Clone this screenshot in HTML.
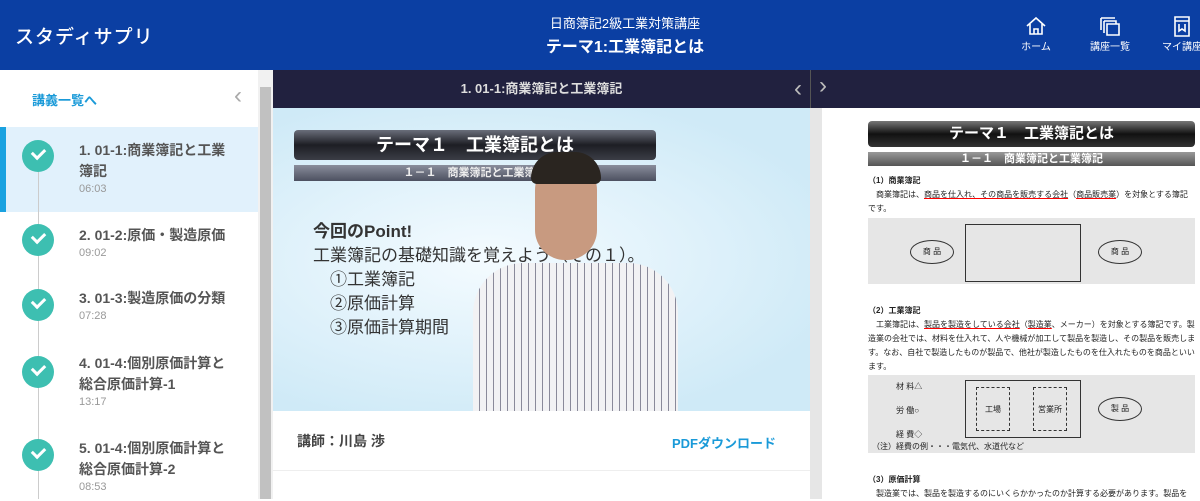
<!DOCTYPE html>
<html><head><meta charset="utf-8"><style>
*{margin:0;padding:0;box-sizing:border-box}
body{width:1200px;height:499px;overflow:hidden;font-family:"Liberation Sans","Noto Sans CJK JP",sans-serif;background:#fff;position:relative}
.hd{position:absolute;left:0;top:0;width:1200px;height:70px;background:#0b3fa3;color:#fff}
.logo{position:absolute;left:15px;top:22px;font-size:19px;letter-spacing:1px;font-weight:500}
.t1{position:absolute;left:0;width:1250px;top:13px;text-align:center;font-size:13px}
.t2{position:absolute;left:0;width:1250px;top:33px;text-align:center;font-size:16px;font-weight:bold}
.nav{position:absolute;top:15px;font-size:10px;text-align:center;width:60px}
.nav svg{display:block;margin:0 auto 1px}
.side{position:absolute;left:0;top:70px;width:258px;height:429px;background:#fff}
.back{position:absolute;left:32px;top:20px;color:#1a9ad8;font-size:13px;font-weight:bold}
.act{position:absolute;left:0;top:57px;width:258px;height:85px;background:#e1f1fc;border-left:6px solid #1aa2e0}
.ck{position:absolute;left:22px;width:32px;height:32px;border-radius:50%;background:#3dbfb1}
.ck:after{content:"";position:absolute;left:10px;top:8px;width:10px;height:6px;border-left:3px solid #fff;border-bottom:3px solid #fff;transform:rotate(-45deg)}
.it{position:absolute;left:79px;font-size:14px;font-weight:bold;color:#555;line-height:21px;width:160px}
.tm{font-size:11px;color:#999;font-weight:normal;line-height:14px}
.line{position:absolute;left:38px;width:1px;background:#ccc}
.sb{position:absolute;left:258px;top:70px;width:15px;height:429px;background:#f1f1f1}
.sb div{position:absolute;left:2px;top:17px;width:11px;height:412px;background:#c1c1c1}
.bar{position:absolute;top:70px;height:38px;background:#21213f;color:#ddd}
.vid{position:absolute;left:273px;top:108px;width:537px;height:303px;background:radial-gradient(ellipse at 40% 50%,#f4fbff,#cfeaf7 80%);overflow:hidden}
.vt{position:absolute;left:21px;top:22px;width:362px;height:30px;border-radius:4px;background:linear-gradient(#6a6e7a,#1d1e24 50%,#3b3d46);color:#fff;font-size:18px;font-weight:bold;text-align:center;line-height:30px}
.vs{position:absolute;left:21px;top:57px;width:362px;height:16px;background:linear-gradient(#8a8e9c,#4c5060);color:#eee;font-size:11px;font-weight:bold;text-align:center;line-height:16px}
.vp{position:absolute;left:40px;top:112px;font-size:17px;color:#333;line-height:24px}
.man{position:absolute;left:200px;top:155px;width:205px;height:150px;background:repeating-linear-gradient(90deg,#f2f2f4 0 6px,#8a8a9a 6px 7px);border-radius:50px 50px 0 0}
.head{position:absolute;left:262px;top:52px;width:62px;height:100px;border-radius:30px;background:#c89a80}
.hair{position:absolute;left:258px;top:44px;width:70px;height:32px;border-radius:35px 35px 8px 8px;background:#2a2520}
.info{position:absolute;left:273px;top:411px;width:537px;height:60px;border-bottom:1px solid #eee}
.doc{position:absolute;left:822px;top:108px;width:378px;height:391px;background:#fff;font-size:8px;color:#222}
.gs{position:absolute;left:810px;top:108px;width:12px;height:391px;background:#e6e6e6}
.dbox{position:absolute;left:46px;width:327px;background:#e6e6e6}
.ov{position:absolute;border:1.5px solid #333;border-radius:50%;width:44px;height:24px;text-align:center;line-height:21px}
</style></head><body>
<div class="hd">
<div class="logo">スタディサプリ</div>
<div class="t1">日商簿記2級工業対策講座</div>
<div class="t2">テーマ1:工業簿記とは</div>
<div class="nav" style="left:1006px"><svg width="22" height="22" viewBox="0 0 22 22" fill="none" stroke="#fff" stroke-width="1.6"><path d="M2 11L11 3l9 8M5 9v10h12V9M9 19v-5h4v5"/></svg>ホーム</div>
<div class="nav" style="left:1080px"><svg width="24" height="22" viewBox="0 0 24 22" fill="none" stroke="#fff" stroke-width="1.6"><path d="M3 3h14M3 3v12M6 6h12v3M6 6v12M9 9h12v11H9z"/></svg>講座一覧</div>
<div class="nav" style="left:1152px"><svg width="20" height="22" viewBox="0 0 20 22" fill="none" stroke="#fff" stroke-width="1.6"><path d="M3 2h14v19H3zM3 6h14M7 9v7l3-2 3 2V9"/></svg>マイ講座</div>
</div>
<div class="side">
<div class="back">講義一覧へ</div><span style="position:absolute;left:234px;top:12px;color:#aaa;font-size:24px">‹</span>
<div class="act"></div>
<div class="line" style="top:100px;height:329px"></div>
<div class="ck" style="top:70px"></div><div class="it" style="top:70px">1. 01-1:商業簿記と工業簿記<div class="tm">06:03</div></div>
<div class="ck" style="top:154px"></div><div class="it" style="top:155px">2. 01-2:原価・製造原価<div class="tm">09:02</div></div>
<div class="ck" style="top:219px"></div><div class="it" style="top:218px">3. 01-3:製造原価の分類<div class="tm">07:28</div></div>
<div class="ck" style="top:286px"></div><div class="it" style="top:283px">4. 01-4:個別原価計算と総合原価計算-1<div class="tm">13:17</div></div>
<div class="ck" style="top:369px"></div><div class="it" style="top:368px">5. 01-4:個別原価計算と総合原価計算-2<div class="tm">08:53</div></div>
</div>
<div class="sb"><div></div></div>
<div class="bar" style="left:273px;width:537px;font-size:13px;font-weight:bold;text-align:center;line-height:38px">1. 01-1:商業簿記と工業簿記<span style="position:absolute;right:8px;top:0;font-size:24px;font-weight:normal;color:#bbb">‹</span></div>
<div class="bar" style="left:810px;width:390px;border-left:1px solid #555"><span style="position:absolute;left:8px;top:2px;font-size:24px;color:#bbb">›</span></div>
<div class="vid">
<div class="vt">テーマ１　工業簿記とは</div>
<div class="vs">１－１　商業簿記と工業簿記</div>
<div class="vp"><b>今回のPoint!</b><br>工業簿記の基礎知識を覚えよう（その１）。<br>　①工業簿記<br>　②原価計算<br>　③原価計算期間</div>
<div class="man"></div><div class="head"></div><div class="hair"></div>
</div>
<div class="info"><div style="position:absolute;left:24px;top:20px;font-size:14px;font-weight:bold;color:#444">講師：川島 渉</div><div style="position:absolute;right:34px;top:22px;font-size:13px;font-weight:bold;color:#1a9ad8">PDFダウンロード</div></div>
<div class="gs"></div>
<div class="doc">
<div style="position:absolute;left:46px;top:13px;width:327px;height:26px;border-radius:4px;background:linear-gradient(#777,#111 50%,#333);color:#fff;font-size:15px;font-weight:bold;text-align:center;line-height:26px">テーマ１　工業簿記とは</div>
<div style="position:absolute;left:46px;top:44px;width:327px;height:14px;background:linear-gradient(#999,#555);color:#fff;font-size:11px;font-weight:bold;text-align:center;line-height:14px">１－１　商業簿記と工業簿記</div>
<div style="position:absolute;left:46px;top:66px;line-height:14px;width:330px"><b>（1）商業簿記</b><br>　商業簿記は、<u style="text-decoration-color:red">商品を仕入れ、その商品を販売する会社</u>（<u style="text-decoration-color:red">商品販売業</u>）を対象とする簿記<br>です。</div>
<div class="dbox" style="top:110px;height:66px"><div style="position:absolute;left:97px;top:6px;width:116px;height:58px;border:1.5px solid #333"></div><div class="ov" style="left:42px;top:22px">商 品</div><div class="ov" style="left:230px;top:22px">商 品</div></div>
<div style="position:absolute;left:46px;top:196px;line-height:14px;width:330px"><b>（2）工業簿記</b><br>　工業簿記は、<u style="text-decoration-color:red">製品を製造をしている会社</u>（<u style="text-decoration-color:red">製造業</u>、メーカー）を対象とする簿記です。製造業の会社では、材料を仕入れて、人や機械が加工して製品を製造し、その製品を販売します。なお、自社で製造したものが製品で、他社が製造したものを仕入れたものを商品といいます。</div>
<div class="dbox" style="top:267px;height:78px"><div style="position:absolute;left:97px;top:5px;width:116px;height:58px;border:1.5px solid #333"></div><div style="position:absolute;left:108px;top:12px;width:34px;height:44px;border:1px dashed #333;text-align:center;line-height:44px">工場</div><div style="position:absolute;left:165px;top:12px;width:34px;height:44px;border:1px dashed #333;text-align:center;line-height:44px">営業所</div><div style="position:absolute;left:28px;top:0;line-height:24px">材 料△<br>労 働○<br>経 費◇</div><div class="ov" style="left:230px;top:22px">製 品</div><div style="position:absolute;left:4px;top:66px">（注）経費の例・・・電気代、水道代など</div></div>
<div style="position:absolute;left:46px;top:365px;line-height:14px;width:330px"><b>（3）原価計算</b><br>　製造業では、製品を製造するのにいくらかかったのか計算する必要があります。製品を</div>
</div>
</body></html>
